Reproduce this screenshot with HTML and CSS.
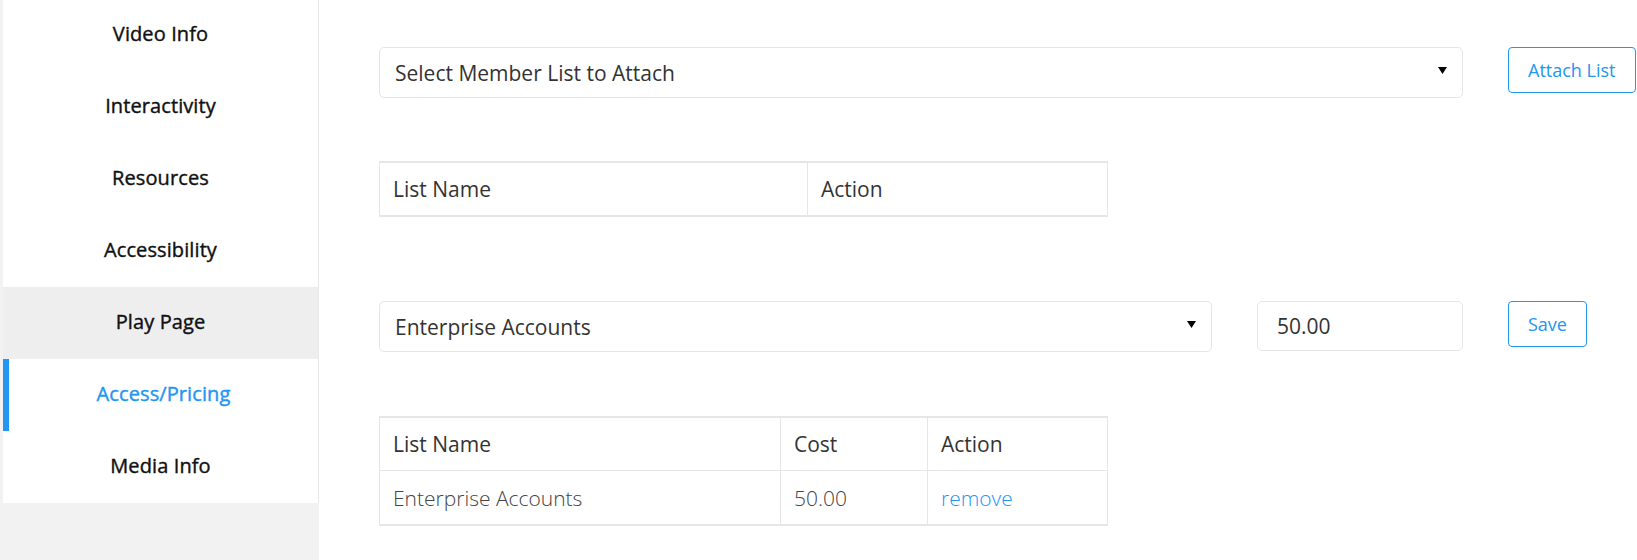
FILE: index.html
```html
<!doctype html>
<html lang="en">
<head>
    <meta charset="UTF-8">
    <title>Access/Pricing</title>
    <link rel="stylesheet" href="styles.css">
</head>
<body>
<div class="page">
    <div class="side">
        <ul class="menu">
            <li>Video Info</li>
            <li>Interactivity</li>
            <li>Resources</li>
            <li>Accessibility</li>
            <li class="hover">Play Page</li>
            <li class="active">Access/Pricing</li>
            <li>Media Info</li>
        </ul>
    </div>
    <div class="main">
        <!-- member lists -->
        <div class="form-row">
            <div class="select-box wide">
                <select>
                    <option>Select Member List to Attach</option>
                    <option>Enterprise Accounts</option>
                </select>
                <svg class="arrow" width="9" height="7" viewBox="0 0 9 7"><path d="M0 0H9L4.5 7Z" fill="#000"/></svg>
            </div>
            <button class="btn">Attach List</button>
        </div>

        <table class="list-table first">
            <colgroup><col class="c-name"><col></colgroup>
            <tr>
                <th>List Name</th>
                <th>Action</th>
            </tr>
        </table>

        <!-- pricing -->
        <div class="form-row price-row">
            <div class="select-box">
                <select>
                    <option>Enterprise Accounts</option>
                </select>
                <svg class="arrow" width="9" height="7" viewBox="0 0 9 7"><path d="M0 0H9L4.5 7Z" fill="#000"/></svg>
            </div>
            <input class="price" type="text" value="50.00">
            <button class="btn">Save</button>
        </div>

        <table class="list-table priced">
            <colgroup><col class="c-name2"><col class="c-cost"><col></colgroup>
            <tr>
                <th>List Name</th>
                <th>Cost</th>
                <th>Action</th>
            </tr>
            <tr>
                <td>Enterprise Accounts</td>
                <td>50.00</td>
                <td><a href="#" class="remove">remove</a></td>
            </tr>
        </table>
    </div>
</div>
</body>
</html>
```

FILE: styles.css
```css
body{
    margin: 0;
    font-family: "Open Sans", "Liberation Sans", sans-serif;
    color: #333;
    background: #fff;
}
.page{
    display: flex;
    min-height: 560px;
}
.side{
    width: 316px;
    padding-left: 3px;
    background: #f2f2f2;
    flex-shrink: 0;
}
.menu{
    list-style-type: none;
    margin: -1px 0 0 0;
    padding: 0;
    background: #fff;
    border-right: 1px solid #e8e8e8;
}
.menu li{
    box-sizing: border-box;
    height: 72px;
    padding-bottom: 3px;
    display: flex;
    align-items: center;
    justify-content: center;
    font-size: 20px;
    font-weight: 400;
    letter-spacing: 0.1px;
    -webkit-text-stroke: 0.4px currentColor;
    color: #111;
}
.menu li.hover{
    background: #eeeeee;
}
.menu li.active{
    color: #2196f3;
    border-left: 6px solid #2196f3;
}
.main{
    flex: 1;
    padding: 47px 0 0 60px;
}
.form-row{
    display: grid;
    grid-template-columns: 833px 206px auto;
    column-gap: 45px;
    align-items: start;
}
.price-row{
    margin-top: 84px;
}
.select-box{
    position: relative;
}
.select-box.wide{
    grid-column: 1 / 3;
}
.select-box select{
    width: 100%;
    height: 51px;
    -webkit-appearance: none;
    appearance: none;
    border: 1px solid #e6e6e6;
    border-radius: 5px;
    background: #fff;
    padding: 0 40px 0 15px;
    font-family: inherit;
    font-size: 21px;
    color: #333;
    outline: none;
}
.select-box .arrow{
    position: absolute;
    right: 16px;
    top: 20px;
}
.price{
    box-sizing: border-box;
    width: 206px;
    height: 50px;
    border: 1px solid #e6e6e6;
    border-radius: 5px;
    padding: 0 19px;
    font-family: inherit;
    font-size: 21px;
    color: #333;
    outline: none;
}
.btn{
    height: 46px;
    padding: 0 19px;
    border: 1px solid #2196f3;
    border-radius: 4px;
    background: #fff;
    color: #2196f3;
    font-family: inherit;
    font-size: 18px;
    justify-self: start;
}
.list-table{
    width: 729px;
    border-collapse: collapse;
    margin-top: 63px;
    border-top: 2px solid #e6e6e6;
    border-bottom: 2px solid #e6e6e6;
    font-size: 21px;
}
.list-table.priced{
    margin-top: 64px;
}
.list-table th,
.list-table td{
    border: 1px solid #e6e6e6;
    height: 52px;
    padding: 0 13px;
    text-align: left;
    font-weight: 400;
    color: #333;
}
.list-table td{
    height: 53px;
    font-weight: 300;
    color: #444;
}
.c-name{
    width: 428px;
}
.c-name2{
    width: 401px;
}
.c-cost{
    width: 147px;
}
.remove{
    color: #2196f3;
    text-decoration: none;
}
```
